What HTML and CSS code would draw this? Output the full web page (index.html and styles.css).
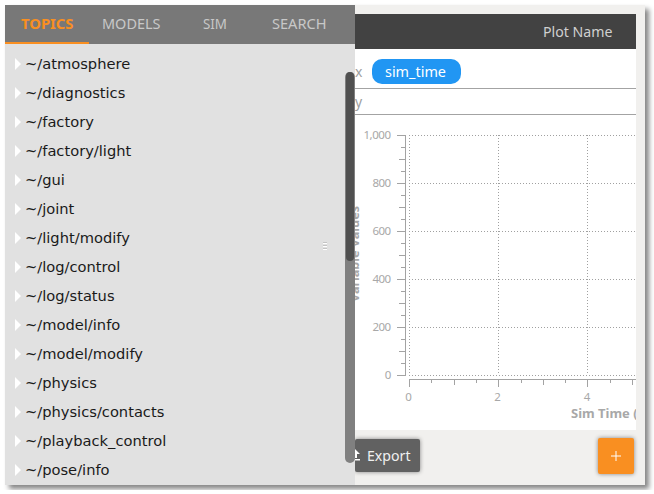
FILE: index.html
```html
<!DOCTYPE html>
<html lang="en">
<head>
<meta charset="utf-8">
<title>Plot</title>
<link rel="stylesheet" href="styles.css">
</head>
<body>
<div class="window">
  <aside class="sidebar">
    <nav class="tabs">
      <span class="tab active"><svg class="lbl" width="53" height="20"><text x="0" y="14" textLength="52.5" lengthAdjust="spacingAndGlyphs">TOPICS</text></svg></span>
      <span class="tab"><svg class="lbl" width="59" height="20"><text x="0" y="14" textLength="58.5" lengthAdjust="spacingAndGlyphs">MODELS</text></svg></span>
      <span class="tab"><svg class="lbl" width="25" height="20"><text x="0" y="14" textLength="24" lengthAdjust="spacingAndGlyphs">SIM</text></svg></span>
      <span class="tab"><svg class="lbl" width="55" height="20"><text x="0" y="14" textLength="54.5" lengthAdjust="spacingAndGlyphs">SEARCH</text></svg></span>
    </nav>
    <ul class="topics">
      <li>~/atmosphere</li>
      <li>~/diagnostics</li>
      <li>~/factory</li>
      <li>~/factory/light</li>
      <li>~/gui</li>
      <li>~/joint</li>
      <li>~/light/modify</li>
      <li>~/log/control</li>
      <li>~/log/status</li>
      <li>~/model/info</li>
      <li>~/model/modify</li>
      <li>~/physics</li>
      <li>~/physics/contacts</li>
      <li>~/playback_control</li>
      <li>~/pose/info</li>
    </ul>
    <div class="grip"><i></i><i></i><i></i></div>
    <div class="scrollbar"><div class="thumb"></div></div>
  </aside>
  <main class="main">
    <section class="plot">
      <header class="plot-head"><svg class="lbl" width="71" height="20"><text x="0" y="14" textLength="69.5" lengthAdjust="spacingAndGlyphs">Plot Name</text></svg></header>
      <div class="row row-x"><span class="axis">x</span><span class="pill"><svg class="lbl" width="62" height="20"><text x="0" y="14" textLength="61" lengthAdjust="spacingAndGlyphs">sim_time</text></svg></span></div>
      <div class="row row-y"><span class="axis">y</span></div>
      <svg class="chart" width="281" height="315" viewBox="355 115 281 315">
        <path class="grid" d="M409 135.5H636M409 183.5H636M409 231.5H636M409 279.5H636M409 327.5H636M409 375.5H636M409.5 135V375M498.5 135V375M587.5 135V375"/>
        <path class="line" d="M405.5 135V376M397 135.5H405M397 183.5H405M397 231.5H405M397 279.5H405M397 327.5H405M397 375.5H405"/>
        <path class="line" d="M401 147.5h4M399 159.5h6M401 171.5h4M401 195.5h4M399 207.5h6M401 219.5h4M401 243.5h4M399 255.5h6M401 267.5h4M401 291.5h4M399 303.5h6M401 315.5h4M401 339.5h4M399 351.5h6M401 363.5h4"/>
        <path class="line" d="M409 379.5H636M409.5 379v8M498.5 379v8M587.5 379v8M454.5 379v6M543.5 379v6M632.5 379v6M431.5 379v4M476.5 379v4M521.5 379v4M565.5 379v4M610.5 379v4"/>
        <g class="num">
          <text x="363.5" y="139" textLength="27.5">1,000</text>
          <text x="372.5" y="187" textLength="18.5">800</text>
          <text x="372.5" y="235" textLength="18.5">600</text>
          <text x="372.5" y="283" textLength="18.5">400</text>
          <text x="372.5" y="331" textLength="18.5">200</text>
          <text x="384.7" y="379">0</text>
          <text x="405.2" y="401">0</text>
          <text x="494.2" y="401">2</text>
          <text x="583.7" y="401">4</text>
        </g>
        <text class="title" x="571" y="418" textLength="92" lengthAdjust="spacingAndGlyphs">Sim Time (sec)</text>
        <text class="title" transform="translate(359 302) rotate(-90)" textLength="96" lengthAdjust="spacingAndGlyphs">Variable Values</text>
      </svg>
    </section>
    <footer class="actions">
      <button class="export"><svg class="up" width="10" height="12" viewBox="0 0 10 12"><path d="M0 0L5 5H2V9H-2V5H-5ZM-5 10H5V11.5H-5Z"/></svg><svg class="lbl" width="45" height="20"><text x="0" y="14" textLength="43.5" lengthAdjust="spacingAndGlyphs">Export</text></svg></button>
      <button class="add"><svg width="10" height="10"><path d="M5 0V10M0 5H10"/></svg></button>
    </footer>
  </main>
</div>
</body>
</html>
```
FILE: styles.css
```css
* { box-sizing: border-box; }
body { margin: 0; background: #fff; font: 14px "Noto Sans", sans-serif; overflow: hidden; }
.window { display: flex; width: 640px; height: 480px; margin: 5px; background: #f1f0ee; box-shadow: 4px 4px 5px rgba(0,0,0,.48); }
.lbl { display: block; overflow: visible; fill: currentColor; }
.sidebar { position: relative; flex: none; width: 350px; background: #e1e1e1; }
.tabs { display: grid; grid-template-columns: repeat(4, 84px); height: 39px; background: #787878; color: #c8c8c8; }
.tab { display: flex; justify-content: center; padding-top: 10px; }
.tab.active { color: #f98f21; font-weight: 700; border-bottom: 2px solid #f98f21; }
.topics { margin: 0; padding: 5px 0 0 10px; list-style: none; font: 14.67px "DejaVu Sans", sans-serif; color: #1a1a1a; }
.topics li { display: flex; align-items: center; gap: 4px; height: 29px; white-space: pre; }
.topics li::before { content: ""; border-left: 6px solid #fff; border-top: 6px solid transparent; border-bottom: 6px solid transparent; }
.grip { position: absolute; left: 318px; top: 237px; width: 4px; display: grid; gap: 1px; }
.grip i { height: 2px; background: #fff; border-top: 1px solid #c4c4c4; }
.scrollbar { position: absolute; left: 340px; top: 67px; width: 10px; height: 391px; padding: 0 1px; border-radius: 5px; background: #808080; }
.thumb { height: 189px; border-radius: 4px; background: #505050; }
.main { flex: 1; min-width: 0; padding: 9px 9px 0 0; overflow: hidden; }
.plot { height: 416px; background: #fff; overflow: hidden; }
.plot-head { display: flex; justify-content: flex-end; height: 35px; padding: 9px 22px 0 0; background: #424242; color: #d0d0d0; }
.row { display: flex; align-items: center; border-bottom: 1px solid #a3a3a3; color: #a0a0a0; }
.row-x { height: 40px; padding-top: 5px; }
.row-y { height: 26px; }
.axis { width: 17px; }
.pill { width: 89px; height: 25px; padding: 4px 13px 0; border-radius: 10px; background: #2196f3; color: #fff; }
.chart { display: block; }
.grid { stroke: #a0a0a0; stroke-dasharray: 1 2; fill: none; }
.line { stroke: #a3a3a3; fill: none; }
.num { font-size: 11.5px; fill: #a8a8a8; }
.title { font-size: 12px; font-weight: 700; fill: #a8a8a8; }
.actions { display: flex; justify-content: space-between; height: 55px; padding: 8px 2px 0 0; }
button { display: flex; border: 0; padding: 0; font: 14px "Noto Sans", sans-serif; color: #fff; box-shadow: 0 0 4px rgba(0,0,0,.45); border-radius: 2px; }
.export { width: 65px; height: 33px; margin-top: 1px; padding-top: 8px; background: #616161; color: #f0f0f0; gap: 2px; }
.up { fill: #fff; overflow: visible; margin-top: 2px; }
.add { width: 36px; height: 36px; align-items: center; justify-content: center; background: #f98f21; }
.add path { stroke: #fff; }
```
